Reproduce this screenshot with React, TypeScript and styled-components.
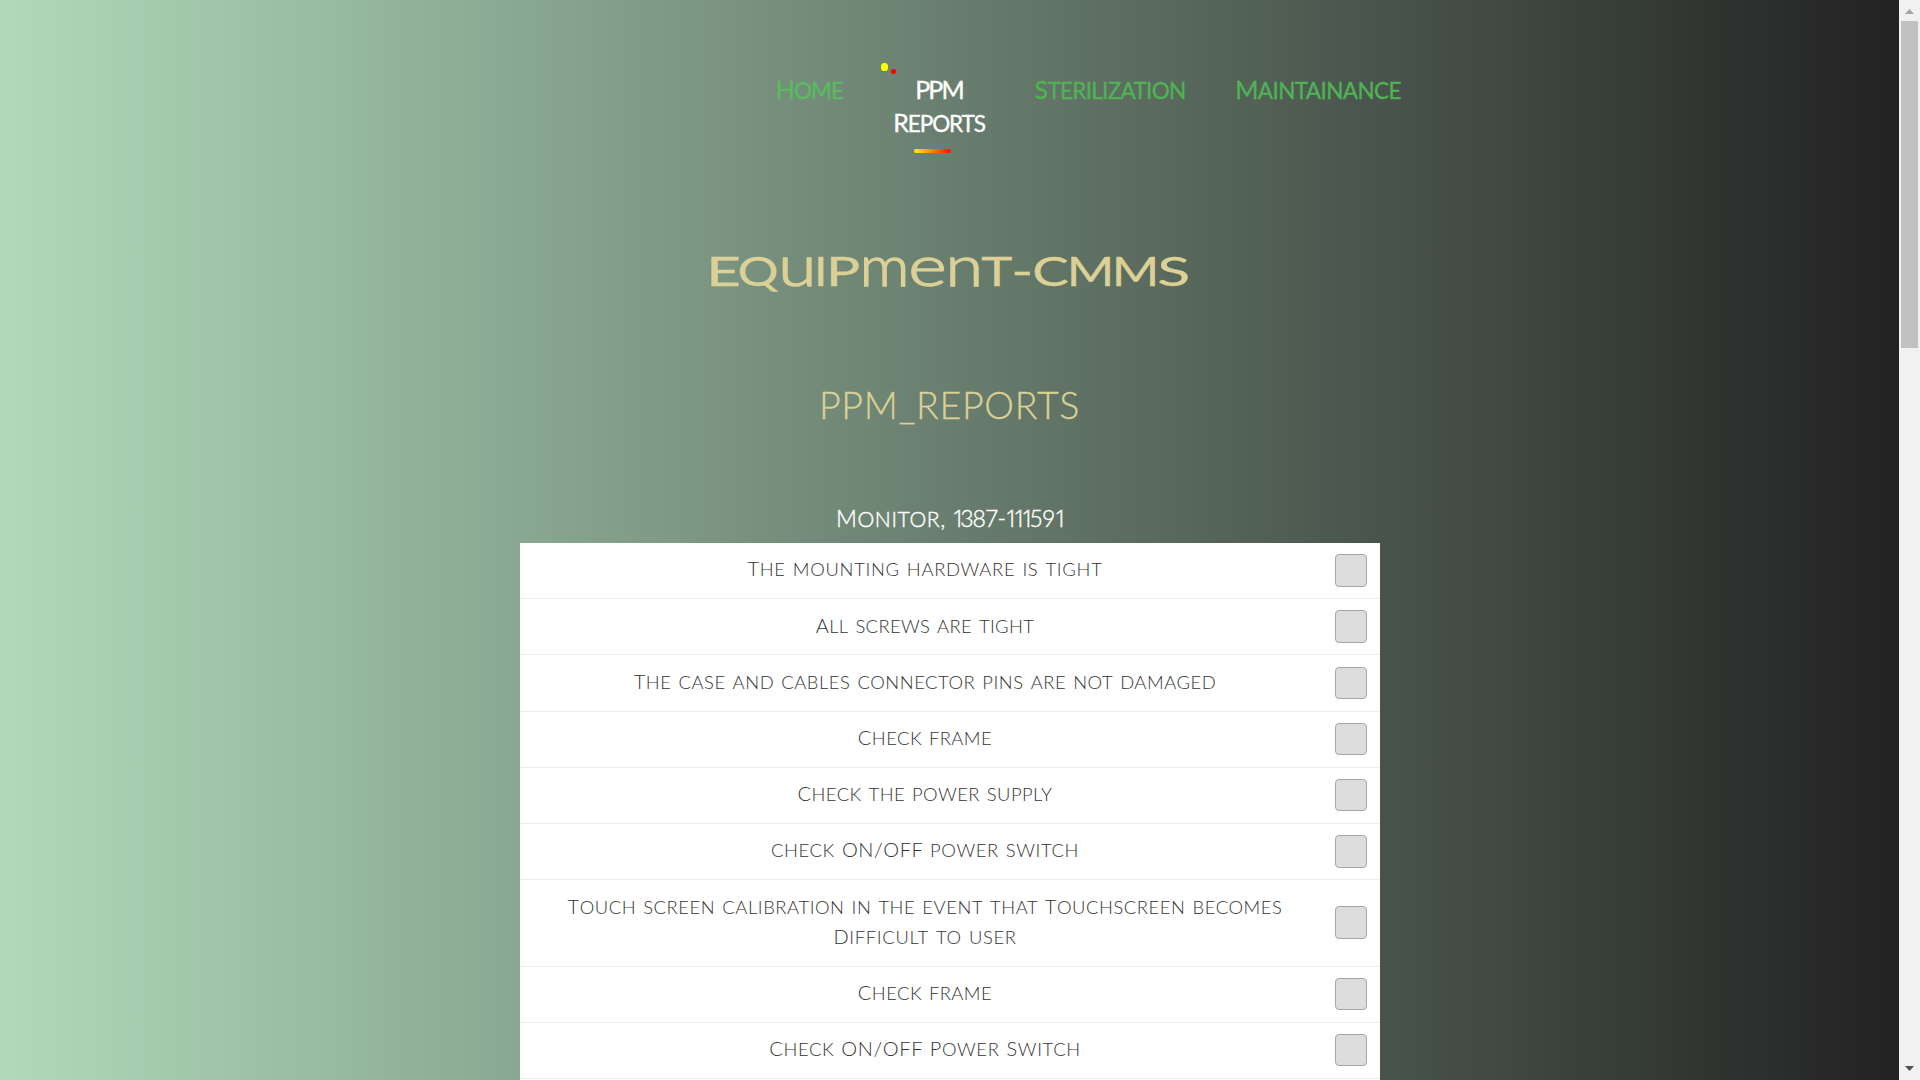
import React from "react";
import styled, { createGlobalStyle } from "styled-components";

const GlobalStyle = createGlobalStyle`
  * { box-sizing: border-box; }
  body { margin: 0; overflow: hidden; }
`;

const Screen = styled.div`
  display: flex;
  width: 1920px;
  height: 1080px;
  overflow: hidden;
  font-family: "Lato", "Liberation Sans", sans-serif;
`;

const Page = styled.main`
  width: 1899px;
  height: 1080px;
  overflow: hidden;
  display: flex;
  flex-direction: column;
  align-items: center;
  background: linear-gradient(to right, #b0dabb, #222222);

  > * { flex: none; }
`;

const Nav = styled.nav`
  align-self: flex-start;
  display: flex;
  gap: 51px;
  height: 162px;
  padding: 73px 0 0 776px;
`;

const NavItem = styled.a<{ $width: number; $color?: string }>`
  position: relative;
  width: ${(p) => p.$width}px;
  height: 66px;
  display: flex;
  flex-direction: column;
  align-items: center;
  font-size: 25px;
  line-height: 33px;
  white-space: nowrap;
  color: ${(p) => p.$color ?? "#4fb353"};
  -webkit-text-stroke: 0.35px currentColor;
`;

const Dot = styled.span<{ $left: number; $top: number; $w: number; $h: number; $color: string }>`
  position: absolute;
  left: ${(p) => p.$left}px;
  top: ${(p) => p.$top}px;
  width: ${(p) => p.$w}px;
  height: ${(p) => p.$h}px;
  border-radius: 45%;
  background: ${(p) => p.$color};
`;

const Underline = styled.span`
  position: absolute;
  left: 20px;
  top: 76px;
  width: 37px;
  height: 4px;
  border-radius: 2px;
  background: linear-gradient(to right, #fff200, #ff0d00);
`;

const Line = styled.span<{ $spacing?: number }>`
  display: block;
  letter-spacing: ${(p) => p.$spacing ?? 0}px;
`;

const Small = styled.span<{ $scale: number }>`
  font-size: ${(p) => p.$scale}em;
  line-height: 0;
  text-transform: uppercase;
`;

const Title = styled.h1`
  display: flex;
  align-items: baseline;
  height: 66px;
  margin: 73px 0 0;
  padding-left: 1px;
  font-weight: 400;
  line-height: 60px;
  color: #dbd196;
`;

const GlyphBox = styled.span<{ $width: number; $tall: boolean }>`
  display: flex;
  justify-content: center;
  width: ${(p) => p.$width}px;
  font-size: ${(p) => (p.$tall ? 56 : 40)}px;
  font-weight: ${(p) => (p.$tall ? 300 : 400)};
  text-transform: ${(p) => (p.$tall ? "none" : "uppercase")};
  -webkit-text-stroke: ${(p) => (p.$tall ? 1.4 : 0.3)}px currentColor;
`;

const Glyph = styled.span<{ $stretch: number }>`
  transform: scaleX(${(p) => p.$stretch});
`;

const Heading = styled.h2`
  height: 45px;
  margin: 81px 0 0;
  font-size: 37.5px;
  font-weight: 300;
  line-height: 45px;
  letter-spacing: 0.7px;
  color: #dbd196;
  -webkit-text-stroke: 0.3px currentColor;
`;

const Device = styled.h3`
  display: flex;
  width: 227px;
  height: 30px;
  margin: 76px 0 0;
  font-size: 23px;
  font-weight: 300;
  line-height: 30px;
  white-space: pre;
  color: #ffffff;
  -webkit-text-stroke: 0.4px currentColor;
`;

const DeviceName = styled.span`
  width: 116px;
  letter-spacing: 0.6px;
`;

const Digits = styled.span`
  letter-spacing: -0.9px;
`;

const Ones = styled.span`
  font-family: "Open Sans", "Noto Sans", sans-serif;
  line-height: 0;
  letter-spacing: -5px;
`;

const List = styled.ul`
  width: 860px;
  margin: 10px 0 0 1px;
  padding: 0 0 10px;
  list-style: none;
  background: #ffffff;
`;

const Row = styled.li<{ $tall?: boolean }>`
  display: flex;
  align-items: center;
  height: ${(p) => (p.$tall ? 86.5 : 56.2)}px;
  border-bottom: 1px solid #ebebeb;
`;

const RowText = styled.div`
  width: 810px;
  padding-bottom: 4.4px;
  text-align: center;
  font-size: 20px;
  font-weight: 300;
  line-height: 30px;
  word-spacing: 1px;
  white-space: nowrap;
  color: #333333;
`;

const Checkbox = styled.span`
  width: 32px;
  height: 32.4px;
  margin: 0 0 0.4px 5px;
  border: 1px solid #a6a6a6;
  border-radius: 4px;
  background: #dddddd;
`;

const Scrollbar = styled.aside`
  width: 21px;
  height: 1080px;
  padding: 9px 2px;
  display: flex;
  flex-direction: column;
  align-items: center;
  background: #f1f1f1;
`;

const Thumb = styled.div`
  width: 17px;
  height: 327px;
  margin: 7px 0 auto;
  background: #c1c1c1;
`;

function SmallCaps({ text, scale = 0.92 }: { text: string; scale?: number }) {
  return (
    <>
      {text.split(/([a-z]+)/).map((part, i) =>
        /[a-z]/.test(part) ? (
          <Small key={i} $scale={scale}>{part}</Small>
        ) : (
          part
        )
      )}
    </>
  );
}

const titleGlyphs: [string, number, number][] = [
  ["E", 27, 1.5],
  ["q", 41, 1.28],
  ["u", 37, 1.24],
  ["i", 11, 1.2],
  ["p", 33.5, 1.42],
  ["m", 48.5, 1.1],
  ["e", 38.5, 1.32],
  ["n", 34, 1.22],
  ["t", 31.5, 1.32],
  ["-", 19.5, 1.5],
  ["C", 36, 1.36],
  ["M", 45, 1.28],
  ["M", 45, 1.28],
  ["S", 31.5, 1.52],
];

const checks: { lines: [string, number][] }[] = [
  { lines: [["The mounting hardware is tight", 0.69]] },
  { lines: [["All screws are tight", 0.38]] },
  { lines: [["The case and cables connector pins are not damaged", 0.55]] },
  { lines: [["Check frame", 0.45]] },
  { lines: [["Check the power supply", 0.45]] },
  { lines: [["check ON/OFF power switch", 0.61]] },
  {
    lines: [
      ["Touch screen calibration in the event that Touchscreen becomes", 0.57],
      ["Difficult to user", 0.67],
    ],
  },
  { lines: [["Check frame", 0.45]] },
  { lines: [["Check ON/OFF Power Switch", 0.63]] },
];

export default function App() {
  return (
    <Screen>
      <GlobalStyle />
      <Page>
        <Nav>
          <NavItem $width={67} $color="#5abb5f"><Line $spacing={-0.9}><SmallCaps text="Home" scale={0.9} /></Line></NavItem>
          <NavItem $width={90} $color="#ffffff">
            <Dot $left={-13} $top={-10} $w={7} $h={8} $color="#ffff00" />
            <Dot $left={-3} $top={-4} $w={5} $h={5} $color="#ff0000" />
            <Line $spacing={-1.9}>PPM</Line>
            <Line $spacing={-1.1}><SmallCaps text="Reports" scale={0.9} /></Line>
            <Underline />
          </NavItem>
          <NavItem $width={150}><Line $spacing={-0.7}><SmallCaps text="Sterilization" scale={0.9} /></Line></NavItem>
          <NavItem $width={164}><Line $spacing={-0.6}><SmallCaps text="Maintainance" scale={0.9} /></Line></NavItem>
        </Nav>
        <Title>
          {titleGlyphs.map(([char, width, stretch], i) => (
            <GlyphBox key={i} $width={width} $tall={"umen".includes(char)}>
              <Glyph $stretch={stretch}>{char}</Glyph>
            </GlyphBox>
          ))}
        </Title>
        <Heading>PPM_REPORTS</Heading>
        <Device>
          <DeviceName><SmallCaps text="Monitor, " scale={0.92} /></DeviceName>
          <Digits>
            {"1387-111591".split(/(1+)/).map((d, i) => (d.startsWith("1") ? <Ones key={i}>{d}</Ones> : d))}
          </Digits>
        </Device>
        <List>
          {checks.map(({ lines }, i) => (
            <Row key={i} $tall={lines.length > 1}>
              <RowText>
                {lines.map(([text, spacing]) => (
                  <Line key={text} $spacing={spacing}><SmallCaps text={text} /></Line>
                ))}
              </RowText>
              <Checkbox />
            </Row>
          ))}
        </List>
      </Page>
      <Scrollbar>
        <svg width="9" height="5" viewBox="0 0 9 5"><path d="M4.5 0 9 5H0Z" fill="#a3a3a3" /></svg>
        <Thumb />
        <svg width="9" height="5" viewBox="0 0 9 5"><path d="M0 0H9L4.5 5Z" fill="#505050" /></svg>
      </Scrollbar>
    </Screen>
  );
}
